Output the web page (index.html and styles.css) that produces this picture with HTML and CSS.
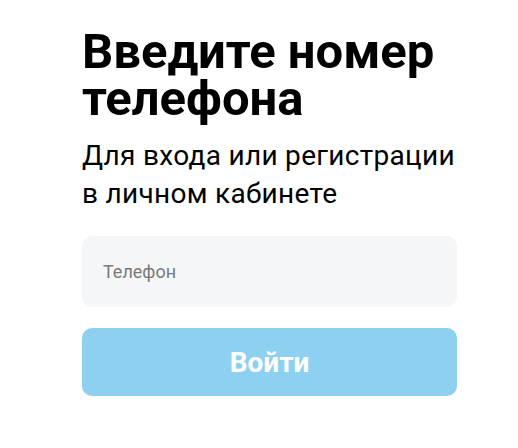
FILE: index.html
```html
<!DOCTYPE html>
<html lang="ru">
<head>
    <meta charset="UTF-8">
    <meta name="viewport" content="width=device-width, initial-scale=1.0">
    <title>Вход</title>
    <link rel="stylesheet" href="styles.css">
</head>
<body>
    <div class="login">
        <h1 class="title">Введите номер телефона</h1>
        <p class="subtitle">Для входа или регистрации<br>в личном кабинете</p>
        <input class="phone" type="tel" placeholder="Телефон">
        <button class="submit" disabled>Войти</button>
    </div>
</body>
</html>
```
FILE: styles.css
```css
body {
    margin: 0;
    background: #fff;
    font-family: Roboto, "Noto Sans", sans-serif;
}
.login {
    width: 375px;
    margin-left: 82px;
    padding-top: 28px;
    display: flex;
    flex-direction: column;
}
.title {
    margin: 0;
    font-size: 49px;
    line-height: 47px;
    font-weight: 700;
    color: #000;
}
.subtitle {
    margin: 15px 0 0;
    font-size: 28px;
    line-height: 38px;
    letter-spacing: 0.3px;
    color: #000;
}
.phone {
    margin-top: 23px;
    height: 71px;
    padding: 0 21px;
    border: none;
    border-radius: 10px;
    background: #f5f6f8;
    font-family: inherit;
    font-size: 18px;
    color: #000;
    box-sizing: border-box;
    outline: none;
}
.phone::placeholder {
    color: #7a7a7a;
}
.submit {
    margin-top: 21px;
    height: 68px;
    border: none;
    border-radius: 10px;
    background: #8ed0f0;
    color: #fff;
    font-family: inherit;
    font-size: 28px;
    font-weight: 700;
    cursor: pointer;
}
```
